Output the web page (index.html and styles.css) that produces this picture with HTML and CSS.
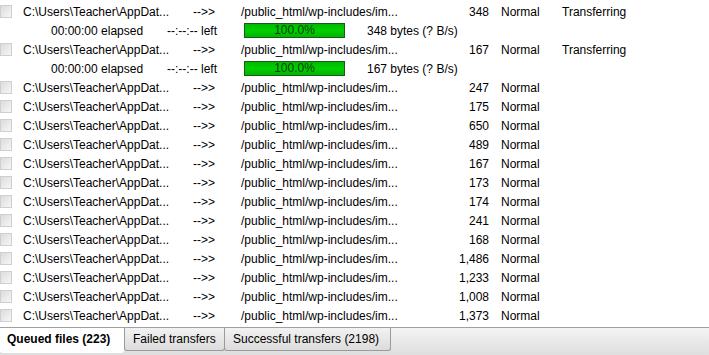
FILE: index.html
```html
<!DOCTYPE html>
<html lang="en">
<head>
    <meta charset="UTF-8">
    <title>Transfer Queue</title>
    <link rel="stylesheet" href="styles.css">
</head>
<body>
    <div class="queue" id="queue"></div>
    <div class="tabs">
        <div class="tab active">Queued files (223)</div>
        <div class="tab failed">Failed transfers</div>
        <div class="tab done">Successful transfers (2198)</div>
    </div>

    <script>
        // Files in the queue: size, and whether they are transferring
        const files = [
            ["348", true], ["167", true], ["247"], ["175"], ["650"], ["489"],
            ["167"], ["173"], ["174"], ["241"], ["168"], ["1,486"], ["1,233"],
            ["1,008"], ["1,373"]
        ];

        const queue = document.getElementById("queue");
        let html = "";
        for (const f of files) {
            html += `<div class="row">
                <span class="check"></span>
                <span class="local">C:\\Users\\Teacher\\AppDat...</span>
                <span class="arrow">--&gt;&gt;</span>
                <span class="remote">/public_html/wp-includes/im...</span>
                <span class="size">${f[0]}</span>
                <span class="prio">Normal</span>
                <span class="status">${f[1] ? "Transferring" : ""}</span>
            </div>`;
            if (f[1]) {
                html += `<div class="row progress">
                    <span class="elapsed">00:00:00 elapsed</span>
                    <span class="left">--:--:-- left</span>
                    <span class="bar">100.0%</span>
                    <span class="bytes">${f[0]} bytes (? B/s)</span>
                </div>`;
            }
        }
        queue.innerHTML = html;
    </script>
</body>
</html>
```

FILE: styles.css
```css
body {
    margin: 0;
    font-family: "Liberation Sans", Arial, sans-serif;
    font-size: 12px;
    color: #000;
    background-color: #fff;
    width: 709px;
    height: 355px;
    overflow: hidden;
    display: flex;
    flex-direction: column;
}
.queue {
    padding-top: 2px;
    height: 328px;
    flex-shrink: 0;
    border-bottom: 1px solid #a0a0a0;
    box-sizing: border-box;
    overflow: hidden;
}
.row {
    height: 19px;
    display: flex;
    align-items: center;
    white-space: nowrap;
}
.check {
    width: 12px;
    height: 13px;
    margin-right: 11px;
    border: 1px solid #cfcfcf;
    background: linear-gradient(135deg, #dcdcdc, #f6f6f6);
    box-sizing: border-box;
}
.local {
    width: 170px;
}
.arrow {
    width: 48px;
}
.remote {
    width: 200px;
}
.size {
    width: 48px;
    text-align: right;
    margin-right: 12px;
}
.prio {
    width: 61px;
}
.progress {
    padding-left: 51px;
}
.elapsed {
    width: 116px;
}
.left {
    width: 77px;
}
.bar {
    width: 101px;
    height: 15px;
    box-sizing: border-box;
    border: 1px solid #1a5a1a;
    background: linear-gradient(#00b800, #00d000 50%, #00b400);
    color: #0a3a0a;
    text-align: center;
    line-height: 13px;
    margin-right: 22px;
}
.tabs {
    flex: 1;
    display: flex;
    align-items: flex-start;
    background: linear-gradient(#f4f4f4, #dedede);
}
.tab {
    height: 23px;
    line-height: 22px;
    padding: 0 0 0 8px;
    box-sizing: border-box;
    white-space: nowrap;
    border: 1px solid #9a9a9a;
    border-top: none;
    border-radius: 0 0 3px 3px;
    background: linear-gradient(#f2f2f2, #dcdcdc);
}
.tab.active {
    font-weight: bold;
    background: #fff;
    border: none;
    padding-left: 7px;
    width: 124px;
    height: 25px;
}
.tab.failed {
    width: 101px;
}
.tab.done {
    width: 167px;
    margin-left: -1px;
}
```
